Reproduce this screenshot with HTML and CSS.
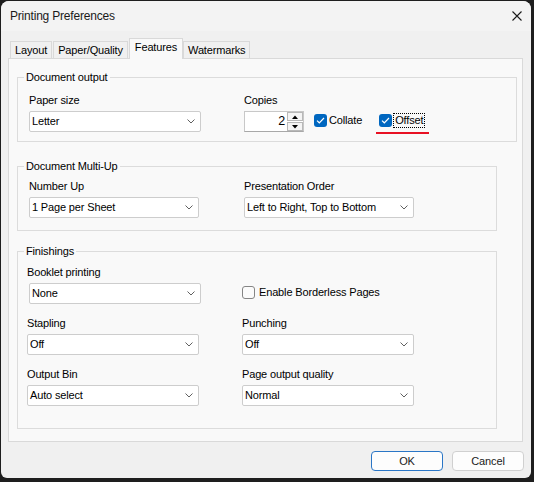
FILE: index.html
```html
<!DOCTYPE html>
<html lang="en">
<head>
<meta charset="utf-8">
<title>Printing Preferences</title>
<link rel="stylesheet" href="styles.css">
</head>
<body>
<div class="window">
  <header class="titlebar">
    <span class="title">Printing Preferences</span>
    <svg class="close-icon" width="10" height="10" viewBox="0 0 10 10"><path d="M0.5 0.5 L9.5 9.5 M9.5 0.5 L0.5 9.5" stroke="#1b1b1b" stroke-width="1.1" fill="none"/></svg>
  </header>
  <main class="client">
    <nav class="tabs">
      <div class="tab">Layout</div>
      <div class="tab">Paper/Quality</div>
      <div class="tab tab-active">Features</div>
      <div class="tab">Watermarks</div>
    </nav>
    <section class="panel">
      <fieldset class="group group-output">
        <legend>Document output</legend>
        <div class="grid">
          <div class="field">
            <div class="label">Paper size</div>
            <div class="select"><span>Letter</span><svg class="chev" width="8" height="5" viewBox="0 0 8 5"><polyline points="0.5,0.5 4,4 7.5,0.5" fill="none" stroke="#606060" stroke-width="1"/></svg></div>
          </div>
          <div class="field">
            <div class="label">Copies</div>
            <div class="copies-row">
              <div class="spin">
                <span class="spin-value">2</span>
                <div class="spin-buttons">
                  <span class="spin-btn"><svg width="6" height="4" viewBox="0 0 6 4"><polygon points="0,4 3,0.5 6,4" fill="#000"/></svg></span>
                  <span class="spin-btn"><svg width="6" height="4" viewBox="0 0 6 4"><polygon points="0,0 6,0 3,3.5" fill="#000"/></svg></span>
                </div>
              </div>
              <div class="check check-collate">
                <span class="box box-checked"><svg width="9" height="7" viewBox="0 0 9 7"><polyline points="1,3.6 3.3,5.8 8,1" fill="none" stroke="#fff" stroke-width="1.2"/></svg></span>
                <span>Collate</span>
              </div>
              <div class="check check-offset">
                <span class="box box-checked"><svg width="9" height="7" viewBox="0 0 9 7"><polyline points="1,3.6 3.3,5.8 8,1" fill="none" stroke="#fff" stroke-width="1.2"/></svg></span>
                <span class="focus-text">Offset</span>
              </div>
            </div>
          </div>
        </div>
      </fieldset>

      <fieldset class="group group-multiup">
        <legend>Document Multi-Up</legend>
        <div class="grid">
          <div class="field">
            <div class="label">Number Up</div>
            <div class="select select-narrow"><span>1 Page per Sheet</span><svg class="chev" width="8" height="5" viewBox="0 0 8 5"><polyline points="0.5,0.5 4,4 7.5,0.5" fill="none" stroke="#606060" stroke-width="1"/></svg></div>
          </div>
          <div class="field">
            <div class="label">Presentation Order</div>
            <div class="select select-narrow"><span>Left to Right, Top to Bottom</span><svg class="chev" width="8" height="5" viewBox="0 0 8 5"><polyline points="0.5,0.5 4,4 7.5,0.5" fill="none" stroke="#606060" stroke-width="1"/></svg></div>
          </div>
        </div>
      </fieldset>

      <fieldset class="group group-finish">
        <legend>Finishings</legend>
        <div class="grid">
          <div class="field">
            <div class="label">Booklet printing</div>
            <div class="select select-inset"><span>None</span><svg class="chev" width="8" height="5" viewBox="0 0 8 5"><polyline points="0.5,0.5 4,4 7.5,0.5" fill="none" stroke="#606060" stroke-width="1"/></svg></div>
          </div>
          <div class="check check-solo">
            <span class="box box-empty"></span>
            <span>Enable Borderless Pages</span>
          </div>
          <div class="field">
            <div class="label">Stapling</div>
            <div class="select"><span>Off</span><svg class="chev" width="8" height="5" viewBox="0 0 8 5"><polyline points="0.5,0.5 4,4 7.5,0.5" fill="none" stroke="#606060" stroke-width="1"/></svg></div>
          </div>
          <div class="field">
            <div class="label">Punching</div>
            <div class="select"><span>Off</span><svg class="chev" width="8" height="5" viewBox="0 0 8 5"><polyline points="0.5,0.5 4,4 7.5,0.5" fill="none" stroke="#606060" stroke-width="1"/></svg></div>
          </div>
          <div class="field">
            <div class="label">Output Bin</div>
            <div class="select"><span>Auto select</span><svg class="chev" width="8" height="5" viewBox="0 0 8 5"><polyline points="0.5,0.5 4,4 7.5,0.5" fill="none" stroke="#606060" stroke-width="1"/></svg></div>
          </div>
          <div class="field">
            <div class="label">Page output quality</div>
            <div class="select"><span>Normal</span><svg class="chev" width="8" height="5" viewBox="0 0 8 5"><polyline points="0.5,0.5 4,4 7.5,0.5" fill="none" stroke="#606060" stroke-width="1"/></svg></div>
          </div>
        </div>
      </fieldset>
    </section>
    <div class="buttons">
      <button class="btn btn-default" type="button">OK</button>
      <button class="btn" type="button">Cancel</button>
    </div>
  </main>
</div>
</body>
</html>
```

FILE: styles.css
```css
* {
  box-sizing: border-box;
}

html,
body {
  margin: 0;
}

body {
  width: 534px;
  height: 482px;
  overflow: hidden;
  background: #1e1e1e;
  font-family: "Liberation Sans", Arial, sans-serif;
  font-size: 11px;
  letter-spacing: -0.15px;
  color: #000;
}

.window {
  margin: 1px 0 0 1px;
  width: 530px;
  height: 477px;
  border-radius: 8px 8px 6px 6px;
  background: #f0f0f0;
  overflow: hidden;
  display: flex;
  flex-direction: column;
}

.titlebar {
  flex: none;
  height: 30px;
  padding: 0 9px;
  display: flex;
  align-items: center;
  justify-content: space-between;
  background: #f3f3f3;
}

.title {
  font-size: 12px;
  line-height: 14px;
  letter-spacing: -0.2px;
  color: #1a1a1a;
}

.close-icon {
  display: block;
}

.client {
  flex: 1;
  padding: 7px 8px 0 7px;
  display: flex;
  flex-direction: column;
}

.tabs {
  display: flex;
  align-items: flex-end;
  height: 20px;
  margin-left: 2px;
}

.tab {
  height: 17px;
  padding: 0 4px;
  margin-right: 1px;
  border: 1px solid #d9d9d9;
  border-bottom: none;
  line-height: 16px;
  text-align: center;
  background: #f0f0f0;
  white-space: nowrap;
}

.tab-active {
  position: relative;
  z-index: 1;
  height: 21px;
  margin-right: 0;
  margin-bottom: -1px;
  padding: 0 5px;
  background: #f9f9f9;
}

.panel {
  height: 384px;
  padding: 12px 0 0 8px;
  border: 1px solid #d9d9d9;
  background: #f9f9f9;
}

.group {
  margin: 0;
  width: 480px;
  min-width: 0;
  padding: 10px 0 9px 0;
  border: 1px solid #dcdcdc;
}

.group legend {
  margin-left: 6px;
  padding: 0 2px;
  line-height: 13px;
}

.group-output {
  width: 500px;
}

.group-multiup {
  margin-top: 18px;
  padding: 7px 0 12px 0;
}

.group-finish {
  margin-top: 14px;
  padding: 8px 0 22px 0;
}

.grid {
  display: grid;
  grid-template-columns: 215px 1fr;
  padding-left: 11px;
}

.group-finish .grid {
  padding-left: 9px;
  row-gap: 13px;
}

.label {
  margin-bottom: 4px;
  line-height: 13px;
  white-space: nowrap;
}

.select {
  width: 172px;
  height: 21px;
  padding: 0 5px 0 2px;
  display: flex;
  align-items: center;
  justify-content: space-between;
  line-height: 13px;
  white-space: nowrap;
  background: #fff;
  border: 1px solid #cdcdcd;
  border-radius: 2px;
}

.select-narrow {
  width: 170px;
}

.select-inset {
  margin-left: 2px;
}

.chev {
  display: block;
  flex: none;
}

.copies-row {
  display: flex;
  align-items: center;
}

.spin {
  width: 60px;
  height: 21px;
  display: flex;
  background: #fff;
  border: 1px solid #c8c8c8;
  border-bottom-color: #a8a8a8;
}

.spin-value {
  flex: 1;
  padding-right: 2px;
  text-align: right;
  font-size: 12.5px;
  line-height: 19px;
}

.spin-buttons {
  width: 16px;
  display: flex;
  flex-direction: column;
  gap: 1px;
}

.spin-btn {
  flex: 1;
  display: flex;
  align-items: center;
  justify-content: center;
  border: 1px solid #b8b8b8;
  background: #f4f4f4;
}

.spin-btn svg {
  display: block;
}

.check {
  display: flex;
  align-items: center;
  gap: 2px;
  line-height: 13px;
  white-space: nowrap;
}

.check-collate {
  margin-left: 10px;
  margin-bottom: 2px;
}

.check-offset {
  position: relative;
  margin-left: 17px;
  margin-bottom: 2px;
}

.check-offset::after {
  content: "";
  position: absolute;
  left: -3px;
  right: -5px;
  top: calc(100% + 5px);
  height: 2px;
  background: #e81123;
}

.check-solo {
  align-self: end;
  height: 21px;
  gap: 4px;
  padding-bottom: 2px;
}

.box {
  flex: none;
  width: 13px;
  height: 13px;
  border-radius: 3px;
}

.box-checked {
  display: flex;
  align-items: center;
  justify-content: center;
  background: #0067c0;
}

.box-checked svg {
  display: block;
}

.box-empty {
  border: 1px solid #858585;
  background: #fbfbfb;
}

.focus-text {
  padding: 0 1px;
  outline: 1px dotted #000;
}

.buttons {
  display: flex;
  justify-content: flex-end;
  gap: 9px;
  margin-top: 9px;
  margin-right: -1px;
}

.btn {
  width: 72px;
  height: 20px;
  padding: 0;
  display: flex;
  align-items: center;
  justify-content: center;
  font-family: inherit;
  font-size: 11px;
  letter-spacing: -0.15px;
  color: #1a1a1a;
  background: #fdfdfd;
  border: 1px solid #d0d0d0;
  border-radius: 4px;
}

.btn-default {
  border-color: #2a76c6;
}
```
